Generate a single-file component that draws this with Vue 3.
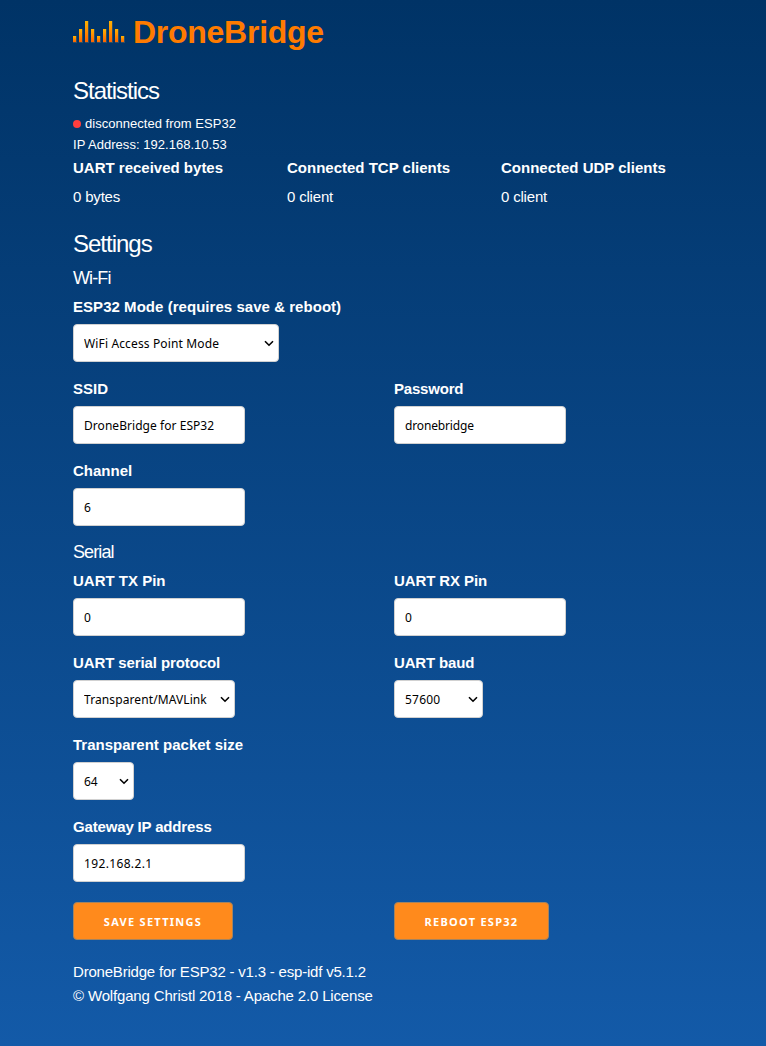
<script setup>
import { reactive } from 'vue'

const bars = [6, 13, 21, 13, 6, 13, 21, 13, 6]
const stats = [
  { label: 'UART received bytes', value: '0 bytes' },
  { label: 'Connected TCP clients', value: '0 client' },
  { label: 'Connected UDP clients', value: '0 client' },
]
const sections = reactive([
  {
    title: 'Wi-Fi',
    rows: [
      [{ id: 'mode', label: 'ESP32 Mode (requires save & reboot)', value: 'WiFi Access Point Mode', select: true }],
      [
        { id: 'ssid', label: 'SSID', value: 'DroneBridge for ESP32' },
        { id: 'password', label: 'Password', value: 'dronebridge' },
      ],
      [{ id: 'channel', label: 'Channel', value: '6' }],
    ],
  },
  {
    title: 'Serial',
    rows: [
      [
        { id: 'tx', label: 'UART TX Pin', value: '0' },
        { id: 'rx', label: 'UART RX Pin', value: '0' },
      ],
      [
        { id: 'protocol', label: 'UART serial protocol', value: 'Transparent/MAVLink', select: true },
        { id: 'baud', label: 'UART baud', value: '57600', select: true },
      ],
      [{ id: 'packet', label: 'Transparent packet size', value: '64', select: true }],
      [{ id: 'gateway', label: 'Gateway IP address', value: '192.168.2.1' }],
    ],
  },
])
</script>

<template>
  <main class="page">
    <header class="brand">
      <svg class="logo" width="52" height="22" viewBox="0 0 52 22">
        <defs>
          <linearGradient id="bar" x1="0" y1="0" x2="0" y2="1">
            <stop offset="0" stop-color="#ffb400" />
            <stop offset="1" stop-color="#ff6200" />
          </linearGradient>
        </defs>
        <g v-for="(h, i) in bars" :key="i">
          <rect :x="i * 6" :y="21 - h" width="4" :height="h + 1" fill="#8a8060" opacity="0.35" />
          <rect :x="i * 6" :y="21 - h" width="3" :height="h" fill="url(#bar)" />
        </g>
      </svg>
      <h1>DroneBridge</h1>
    </header>

    <h2 class="stat-title">Statistics</h2>
    <div class="status"><span class="dot"></span><span class="disc">disconnected from ESP32</span></div>
    <div class="status ip">IP Address: 192.168.10.53</div>
    <div class="stats">
      <div v-for="s in stats" :key="s.label">
        <div class="label">{{ s.label }}</div>
        <div class="value">{{ s.value }}</div>
      </div>
    </div>

    <h2 class="set-title">Settings</h2>
    <section v-for="sec in sections" :key="sec.title">
      <h3>{{ sec.title }}</h3>
      <div v-for="(row, i) in sec.rows" :key="i" class="row">
        <div v-for="f in row" :key="f.id" class="field">
          <label class="label" :class="'label-' + f.id" :for="f.id">{{ f.label }}</label>
          <div v-if="f.select" class="select" :class="f.id">
            <select :id="f.id" v-model="f.value" class="control">
              <option>{{ f.value }}</option>
            </select>
            <svg class="chevron" width="10" height="7" viewBox="0 0 10 7">
              <path d="M1 1.2 L5 5.2 L9 1.2" fill="none" stroke="#000" stroke-width="1.6" />
            </svg>
          </div>
          <input v-else :id="f.id" v-model="f.value" type="text" class="control" :class="f.id" />
        </div>
      </div>
    </section>

    <div class="row actions">
      <div><button class="save">SAVE SETTINGS</button></div>
      <div><button class="reboot">REBOOT ESP32</button></div>
    </div>
    <footer>
      <div class="version">DroneBridge for ESP32 - v1.3 - esp-idf v5.1.2</div>
      <div>© Wolfgang Christl 2018 - Apache 2.0 License</div>
    </footer>
  </main>
</template>

<style>
body {
  background: #135aa8;
}
</style>

<style scoped>
.page {
  box-sizing: border-box;
  height: 1046px;
  padding: 15px 52px 0 73px;
  overflow: hidden;
  background: linear-gradient(#003366, #135aa8);
  color: #fff;
  font: 15px/24px "Liberation Sans", Arial, sans-serif;
}
h1, h2, h3 {
  margin: 0;
}
.brand {
  display: flex;
  height: 34px;
}
.logo {
  margin: 6px 8px 0 0;
}
h1 {
  color: #ff7b00;
  font-size: 32px;
  line-height: 34px;
  letter-spacing: -0.27px;
}
h2 {
  font-size: 24px;
  line-height: 30px;
  font-weight: 400;
  letter-spacing: -1px;
}
.stat-title {
  margin: 27px 0 7px;
}
.set-title {
  margin: 20px 0 8px;
}
.status {
  display: flex;
  align-items: center;
  height: 21px;
  font-size: 13px;
  line-height: 21px;
  letter-spacing: 0.03px;
}
.dot {
  width: 8px;
  height: 8px;
  margin-right: 4px;
  border-radius: 50%;
  background: #ff3e3e;
}
.stats {
  display: grid;
  grid-template-columns: repeat(3, 214px);
  margin-top: 1px;
}
.label {
  display: block;
  margin-bottom: 5px;
  font-weight: 700;
  white-space: nowrap;
}
.label-mode { letter-spacing: 0.04px; }
.label-password { letter-spacing: -0.2px; }
.label-rx, .label-protocol { letter-spacing: -0.1px; }
.label-baud, .label-gateway { letter-spacing: -0.16px; }
.value { letter-spacing: -0.18px; }
h3 {
  height: 28px;
  font-size: 18px;
  line-height: 22px;
  font-weight: 400;
  letter-spacing: -0.9px;
}
.row {
  display: grid;
  grid-template-columns: 321px 321px;
  margin-bottom: 15px;
}
.control {
  display: block;
  box-sizing: border-box;
  width: 172px;
  height: 38px;
  margin: 0;
  padding: 0 10px;
  border: 1px solid #d1d1d1;
  border-radius: 4px;
  background: #fff;
  color: #000;
  font: 12px "Noto Sans", sans-serif;
  outline: none;
  appearance: none;
}
.select {
  position: relative;
}
.select .control {
  width: 100%;
}
.chevron {
  position: absolute;
  right: 5px;
  top: 16px;
}
.mode { width: 206px; }
.mode .control { letter-spacing: 0.14px; }
.protocol { width: 162px; }
.protocol .control { letter-spacing: 0.1px; }
.baud { width: 89px; }
.baud .control { letter-spacing: 0.2px; }
.packet { width: 61px; }
.ssid { letter-spacing: 0.05px; }
.password { letter-spacing: -0.15px; }
.gateway { letter-spacing: 0.35px; }
.actions {
  margin: 20px 0;
}
button {
  display: block;
  width: 160px;
  height: 38px;
  padding: 0;
  border: 1px solid #a3835f;
  border-radius: 4px;
  background: #ff8a1c;
  color: #fff;
  font: 700 11px "Noto Sans", sans-serif;
  letter-spacing: 1.27px;
}
.reboot {
  width: 155px;
}
footer {
  letter-spacing: -0.16px;
}
.version {
  letter-spacing: -0.2px;
}
</style>
